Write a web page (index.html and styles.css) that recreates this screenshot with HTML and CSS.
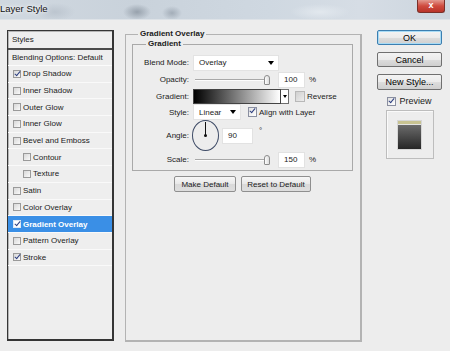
FILE: index.html
```html
<!DOCTYPE html>
<html lang="en">
<head>
    <meta charset="UTF-8">
    <meta name="viewport" content="width=device-width, initial-scale=1.0">
    <title>Layer Style</title>
    <link rel="stylesheet" href="styles.css">
</head>
<body>

    <div class="titlebar">
        <span class="title">Layer Style</span>
        <span class="close">x</span>
    </div>

    <div class="dialog">
        <div class="style-list">
            <div class="list-head">Styles</div>
            <div class="list-blend">Blending Options: Default</div>
            <div class="list-item"><span class="check on"></span>Drop Shadow</div>
            <div class="list-item"><span class="check"></span>Inner Shadow</div>
            <div class="list-item"><span class="check"></span>Outer Glow</div>
            <div class="list-item"><span class="check"></span>Inner Glow</div>
            <div class="list-item"><span class="check"></span>Bevel and Emboss</div>
            <div class="list-item sub"><span class="check"></span>Contour</div>
            <div class="list-item sub"><span class="check"></span>Texture</div>
            <div class="list-item"><span class="check"></span>Satin</div>
            <div class="list-item"><span class="check"></span>Color Overlay</div>
            <div class="list-item active"><span class="check on"></span>Gradient Overlay</div>
            <div class="list-item"><span class="check"></span>Pattern Overlay</div>
            <div class="list-item"><span class="check on"></span>Stroke</div>
        </div>

        <fieldset class="group main">
            <legend>Gradient Overlay</legend>
            <fieldset class="group inner">
                <legend>Gradient</legend>
                <div class="form">
                    <label>Blend Mode:</label>
                    <div class="ctrl">
                        <div class="select blend"><span>Overlay</span><span class="arrow"></span></div>
                    </div>

                    <label>Opacity:</label>
                    <div class="ctrl">
                        <div class="slider"><div class="track"></div><div class="thumb"></div></div>
                        <div class="num">100</div>
                        <span class="unit">%</span>
                    </div>

                    <label>Gradient:</label>
                    <div class="ctrl">
                        <div class="grad"></div>
                        <div class="grad-drop"><span class="arrow small"></span></div>
                        <span class="box-check off"></span>
                        <span class="check-label">Reverse</span>
                    </div>

                    <label>Style:</label>
                    <div class="ctrl">
                        <div class="select linear"><span>Linear</span><span class="arrow"></span></div>
                        <span class="box-check align"></span>
                        <span class="check-label">Align with Layer</span>
                    </div>

                    <label>Angle:</label>
                    <div class="ctrl">
                        <div class="dial"></div>
                        <div class="num wide">90</div>
                        <span class="unit deg">°</span>
                    </div>

                    <label>Scale:</label>
                    <div class="ctrl">
                        <div class="slider"><div class="track"></div><div class="thumb"></div></div>
                        <div class="num">150</div>
                        <span class="unit">%</span>
                    </div>
                </div>
            </fieldset>

            <div class="defaults">
                <button class="plain-btn make">Make Default</button>
                <button class="plain-btn reset">Reset to Default</button>
            </div>
        </fieldset>

        <div class="side">
            <button class="btn ok">OK</button>
            <button class="btn">Cancel</button>
            <button class="btn new">New Style...</button>
            <div class="preview-row"><span class="box-check"></span>Preview</div>
            <div class="preview-box"><div class="preview-art"></div></div>
        </div>
    </div>

</body>
</html>
```

FILE: styles.css
```css
body {
    margin: 0;
    width: 450px;
    height: 351px;
    overflow: hidden;
    background: #ededed;
    font-family: "Liberation Sans", Arial, sans-serif;
    font-size: 8px;
    color: #1b1b1b;
}

/* title bar (blurred glass) */
.titlebar {
    height: 20px;
    display: flex;
    justify-content: space-between;
    align-items: flex-start;
    background:
        radial-gradient(ellipse 14px 8px at 137px 12px, #97a1ac, transparent),
        radial-gradient(ellipse 10px 7px at 172px 13px, #a3adb8, transparent),
        radial-gradient(ellipse 30px 8px at 320px 12px, #e2e8ee, transparent),
        radial-gradient(ellipse 20px 9px at 55px 12px, #bcc5cf, transparent),
        linear-gradient(to right, #d0d8e0, #c9d2db 30%, #cfd8e1 60%, #d6dde5 80%, #ccd5de);
    border-bottom: 1px solid #dde2e7;
    box-sizing: border-box;
}
.title {
    font-size: 9.5px;
    line-height: 17px;
    color: #111;
    text-shadow: 0 0 3px #fff, 0 0 6px #fff;
}
.close {
    width: 28px;
    height: 13px;
    margin-right: 5px;
    box-sizing: border-box;
    background: linear-gradient(#e39a90, #cf4a3e 50%, #b9342a);
    border: 1px solid #7a3029;
    border-top: none;
    border-radius: 0 0 3px 3px;
    color: #fff;
    font-weight: bold;
    font-size: 9px;
    line-height: 11px;
    text-align: center;
}

.dialog {
    display: flex;
    align-items: flex-start;
    padding-left: 7px;
}

/* left list of styles */
.style-list {
    width: 107px;
    height: 311px;
    margin-top: 10px;
    box-sizing: border-box;
    border: 1px solid #353535;
    border-right-width: 2px;
    border-bottom-width: 2px;
    box-shadow: inset 1px 1px 0 #b4b4b4;
    background: #eeeeee;
}
.list-head {
    height: 17px;
    line-height: 17px;
    padding-left: 4px;
    border-bottom: 2px solid #4a4a4a;
}
.list-blend {
    height: 15px;
    line-height: 15px;
    padding-left: 4px;
    border-bottom: 1px solid #fbfbfb;
}
.list-item {
    height: 16.7px;
    box-sizing: border-box;
    display: flex;
    align-items: center;
    gap: 2px;
    padding-left: 5px;
    border-bottom: 1px solid #f9f9f9;
}
.list-item.sub {
    padding-left: 15px;
}
.list-item.active {
    background: #3a8fe6;
    color: #fff;
    font-weight: bold;
}
.check {
    position: relative;
    flex: none;
    width: 8px;
    height: 8px;
    box-sizing: border-box;
    border: 1px solid #9a9a9a;
    background: linear-gradient(135deg, #d8d8d8, #fafafa);
}
.active .check {
    background: #fff;
    border-color: #dfe9f5;
}
.check.on::after,
.box-check::after {
    content: "";
    position: absolute;
    left: 2px;
    top: -1px;
    width: 2px;
    height: 5px;
    border: solid #2d3f80;
    border-width: 0 1.5px 1.5px 0;
    transform: rotate(40deg);
}

/* group boxes */
.group {
    margin: 0;
    min-width: 0;
    border: 1px solid #a9a9a9;
}
.group legend {
    font-weight: bold;
    font-size: 8px;
    line-height: 10px;
    padding: 0 2px;
}
.main {
    width: 237px;
    height: 313px;
    box-sizing: border-box;
    margin: 9px 0 0 11px;
    padding: 0 7px 0 6px;
    border-color: #b3b3b3;
    border-width: 1px 2px 2px 1px;
}
.main > legend {
    margin-left: 6px;
}
.inner {
    padding: 0 0 2px 0;
}
.inner > legend {
    margin-left: 13px;
}

.form {
    display: grid;
    grid-template-columns: 56px auto;
    grid-template-rows: 17px 17px 16px 16px 31px 17px;
    column-gap: 4px;
    align-items: center;
    margin-top: 5px;
}
.form label {
    text-align: right;
}
.ctrl {
    display: flex;
    align-items: center;
}

.select {
    height: 16px;
    box-sizing: border-box;
    display: flex;
    align-items: center;
    justify-content: space-between;
    padding: 0 4px 0 5px;
    background: #fff;
    border: 1px solid #e3e3e3;
}
.select.blend {
    width: 86px;
}
.select.linear {
    width: 48px;
}
.arrow {
    width: 0;
    height: 0;
    border-left: 3px solid transparent;
    border-right: 3px solid transparent;
    border-top: 4px solid #000;
}
.arrow.small {
    border-left-width: 2px;
    border-right-width: 2px;
    border-top-width: 3px;
}

.slider {
    width: 80px;
    display: flex;
    align-items: center;
}
.track {
    width: 72px;
    height: 1px;
    margin-left: 2px;
    background: #a8a8a8;
    border-bottom: 1px solid #fdfdfd;
}
.thumb {
    width: 6px;
    height: 10px;
    margin-left: -3px;
    box-sizing: border-box;
    border: 1px solid #8c8c8c;
    border-radius: 3px 3px 1px 1px;
    background: linear-gradient(to right, #fdfdfd, #dcdcdc);
}
.num {
    width: 27px;
    height: 16px;
    box-sizing: border-box;
    margin-left: 5px;
    padding-left: 5px;
    line-height: 14px;
    background: #fff;
    border: 1px solid #e2e2e2;
}
.num.wide {
    width: 31px;
    margin-left: 3px;
}
.unit {
    margin-left: 4px;
}
.unit.deg {
    margin-left: 6px;
    align-self: flex-start;
    margin-top: 6px;
}

.grad {
    width: 88px;
    height: 15px;
    box-sizing: border-box;
    border: 1px solid #444;
    background: linear-gradient(to right, #000, #fff);
}
.grad-drop {
    width: 8px;
    height: 15px;
    box-sizing: border-box;
    display: flex;
    align-items: center;
    justify-content: center;
    background: #fff;
    border: 1px solid #6e6e6e;
    border-left: none;
}
.box-check {
    position: relative;
    flex: none;
    width: 9px;
    height: 9px;
    box-sizing: border-box;
    border: 1px solid #8a8fa0;
    background: linear-gradient(135deg, #e0e0e0, #ffffff);
}
.box-check.off {
    width: 10px;
    height: 11px;
    margin-left: 6px;
    border-color: #b8b8b8;
    background: linear-gradient(135deg, #cfcfcf, #ededed);
}
.box-check.off::after {
    display: none;
}
.box-check.align {
    height: 10px;
    margin-left: 7px;
}
.check-label {
    margin-left: 2px;
}

.dial {
    position: relative;
    width: 27px;
    height: 31px;
    margin-left: -1px;
    box-sizing: border-box;
    border: 1px solid #3e4b66;
    border-radius: 50%;
}
.dial::before {
    content: "";
    position: absolute;
    left: 12px;
    top: 1px;
    width: 1px;
    height: 14px;
    background: #111;
}
.dial::after {
    content: "";
    position: absolute;
    left: 11px;
    top: 13px;
    width: 3px;
    height: 3px;
    border-radius: 50%;
    background: #111;
}

.defaults {
    display: flex;
    justify-content: center;
    gap: 5px;
    margin-top: 5px;
}
.plain-btn {
    height: 16px;
    padding: 0;
    font-family: inherit;
    font-size: 8px;
    color: #1b1b1b;
    border: 1px solid #8f8f8f;
    border-radius: 2px;
    background: linear-gradient(#f7f7f7, #e8e8e8 50%, #d9d9d9 51%, #dedede);
}
.plain-btn.make {
    width: 62px;
}
.plain-btn.reset {
    width: 70px;
}

/* right column */
.side {
    width: 65px;
    margin: 10px 0 0 15px;
    display: flex;
    flex-direction: column;
    align-items: center;
}
.btn {
    width: 65px;
    height: 15px;
    padding: 0;
    margin-bottom: 7px;
    font-family: inherit;
    font-size: 9px;
    color: #000;
    border: 1px solid #707070;
    border-radius: 2px;
    background: linear-gradient(#f3f3f3, #ebebeb 50%, #dddddd 51%, #cfcfcf);
}
.btn.ok {
    border-color: #3c7fb1;
    box-shadow: inset 0 0 0 1px #a8dbf5;
}
.btn.new {
    height: 16px;
    margin-bottom: 0;
}
.preview-row {
    display: flex;
    align-items: center;
    gap: 3px;
    height: 10px;
    margin-top: 6px;
    font-size: 9px;
}
.preview-box {
    width: 48px;
    height: 49px;
    margin-top: 4px;
    box-sizing: border-box;
    display: flex;
    align-items: center;
    justify-content: center;
    border: 1px solid #bdbdbd;
    box-shadow: inset 1px 1px 0 #fafafa;
}
.preview-art {
    width: 25px;
    height: 30px;
    box-sizing: border-box;
    border: 1px solid #d6d6d6;
    background: linear-gradient(#c8c392 0, #c8c392 3px, #e4e4e4 3px, #e4e4e4 4px, #6b6b6b 4px, #262626);
}
```
